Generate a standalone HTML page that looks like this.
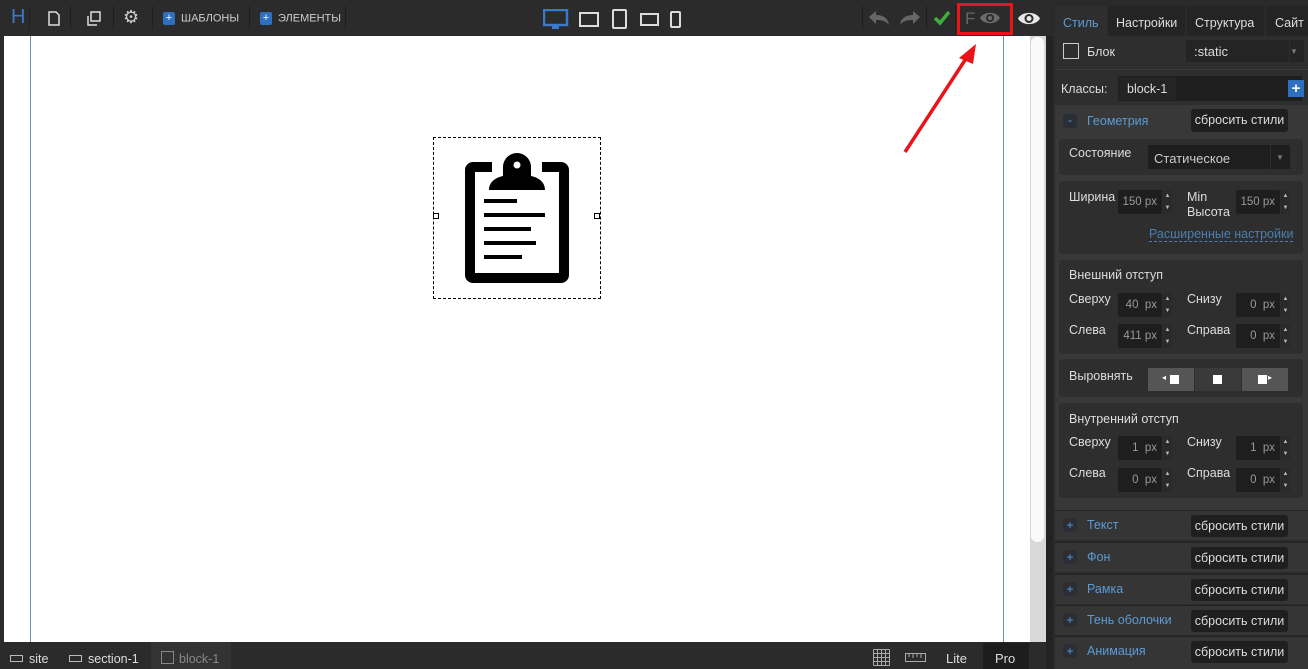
<!DOCTYPE html>
<html><head><meta charset="utf-8"><style>
*{box-sizing:border-box;margin:0;padding:0}
body{width:1308px;height:669px;overflow:hidden;background:#2b2b2b;font-family:"Liberation Sans","DejaVu Sans",sans-serif;font-size:12px;color:#ddd;position:relative}
.a{position:absolute}
.sep{position:absolute;top:6px;width:1px;height:24px;background:#1f1f1f}
.tb{color:#ccc;font-size:11px}
.plus{display:inline-block;width:12px;height:13px;background:#2f6fc0;border-radius:2px;color:#fff;font-size:11px;line-height:13px;text-align:center;vertical-align:middle;margin-right:6px}
.box{position:absolute;left:1059px;width:244px;background:#2e2e2e;border-radius:3px}
.lbl{position:absolute;color:#ddd;font-size:12.5px}
.inp{position:absolute;width:44px;height:24px;background:#1e1e1e;border-radius:2px;color:#999;font-size:11.5px;line-height:24px;text-align:right;padding-right:5px}
.spin{position:absolute;width:9px;height:24px;background:#2a2a2a;color:#bbb;font-size:6px;line-height:12px;text-align:center}
.row{position:absolute;left:1055px;width:253px;height:30px;background:#353535;border-top:1px solid #222}
.row .p{position:absolute;left:8px;top:7px;width:14px;height:14px;background:#2a2f36;border-radius:3px;color:#5b9bd5;text-align:center;line-height:14px;font-size:12px}
.row .t{position:absolute;left:32px;top:7px;color:#5b9bd5;font-size:12.5px}
.row .r{position:absolute;left:136px;top:4px;width:97px;height:22px;background:#1f1f1f;border-radius:3px;color:#ddd;line-height:22px;text-align:center;font-size:12.5px}
</style></head><body>
<!-- top bar -->
<div class="a" style="left:11px;top:6px;color:#3a78c9;font-size:20px">H</div>
<div class="sep" style="left:29px"></div>
<svg class="a" style="left:48px;top:11px" width="12" height="15"><path d="M1 1h7l3 3v10H1z" fill="none" stroke="#ddd" stroke-width="1.5"/></svg>
<div class="sep" style="left:70px"></div>
<svg class="a" style="left:86px;top:11px" width="16" height="16"><path d="M5 1h9v9H5z M2 5v9h9" fill="none" stroke="#ddd" stroke-width="1.5"/></svg>
<div class="sep" style="left:113px"></div>
<div class="a" style="left:123px;top:7px;color:#ccc;font-size:18px">⚙</div>
<div class="sep" style="left:152px"></div>
<div class="a tb" style="left:163px;top:12px"><span class="plus">+</span>ШАБЛОНЫ</div>
<div class="sep" style="left:249px"></div>
<div class="a tb" style="left:260px;top:12px"><span class="plus">+</span>ЭЛЕМЕНТЫ</div>
<div class="sep" style="left:345px"></div>
<svg class="a" style="left:543px;top:9px" width="26" height="22"><rect x="1" y="1" width="23" height="15" fill="none" stroke="#3a78c9" stroke-width="2.5"/><rect x="9" y="16" width="7" height="4" fill="#3a78c9"/></svg>
<svg class="a" style="left:579px;top:12px" width="21" height="16"><rect x="1" y="1" width="18" height="13" fill="none" stroke="#ddd" stroke-width="2"/></svg>
<svg class="a" style="left:612px;top:9px" width="16" height="20"><rect x="1" y="1" width="13" height="18" rx="1" fill="none" stroke="#ddd" stroke-width="2"/></svg>
<svg class="a" style="left:640px;top:13px" width="20" height="14"><rect x="1" y="1" width="17" height="11" fill="none" stroke="#ddd" stroke-width="2"/></svg>
<svg class="a" style="left:670px;top:11px" width="12" height="18"><rect x="1" y="1" width="9" height="15" rx="1" fill="none" stroke="#ddd" stroke-width="2"/></svg>
<div class="sep" style="left:862px"></div>
<svg class="a" style="left:867px;top:10px" width="24" height="16"><path d="M2 7l7-6v4c7 0 12 3 13 10c-3-4-7-5-13-5v4z" fill="#666"/></svg>
<svg class="a" style="left:898px;top:10px" width="24" height="16"><path d="M22 7l-7-6v4c-7 0-12 3-13 10c3-4 7-5 13-5v4z" fill="#666"/></svg>
<div class="sep" style="left:926px"></div>
<svg class="a" style="left:933px;top:10px" width="18" height="16"><path d="M2 8l5 5L16 2" fill="none" stroke="#3fae3f" stroke-width="3.5"/></svg>
<div class="sep" style="left:955px"></div>
<div class="a" style="left:957px;top:3px;width:56px;height:32px;border:3px solid #e8141a"></div>
<div class="a" style="left:965px;top:9px;color:#666;font-size:17px">F</div>
<svg class="a" style="left:979px;top:11px" width="22" height="14"><path d="M1 7C5 0 17 0 21 7C17 14 5 14 1 7z" fill="#6a6a6a"/><circle cx="11" cy="7" r="4" fill="#2b2b2b"/><circle cx="11" cy="7" r="2.2" fill="#6a6a6a"/></svg>
<svg class="a" style="left:1017px;top:11px" width="24" height="15"><path d="M1 7.5C5 0 19 0 23 7.5C19 15 5 15 1 7.5z" fill="#e8e8e8"/><circle cx="12" cy="7.5" r="4.5" fill="#2b2b2b"/><circle cx="12" cy="7.5" r="2.5" fill="#e8e8e8"/></svg>

<!-- canvas -->
<div class="a" style="left:4px;top:36px;width:1026px;height:606px;background:#fff"></div>
<div class="a" style="left:30px;top:36px;width:1px;height:606px;background:#6f8ea8"></div>
<div class="a" style="left:1003px;top:36px;width:1px;height:606px;background:#6f8ea8"></div>
<div class="a" style="left:1030px;top:36px;width:16px;height:606px;background:#d8d8d8"></div>
<div class="a" style="left:1031px;top:37px;width:13px;height:505px;background:#fafafa;border-radius:6px"></div>
<div class="a" style="left:1046px;top:36px;width:7px;height:633px;background:#232323"></div>
<div class="a" style="left:433px;top:137px;width:168px;height:162px;border:1px dashed #000"></div>
<div class="a" style="left:433px;top:213px;width:6px;height:6px;border:1px solid #000;background:#fff"></div>
<div class="a" style="left:594px;top:213px;width:6px;height:6px;border:1px solid #000;background:#fff"></div>
<svg class="a" style="left:460px;top:150px" width="115" height="140" viewBox="460 150 115 140">
<path d="M492 162H473a8 8 0 0 0-8 8v105a8 8 0 0 0 8 8h88a8 8 0 0 0 8-8V170a8 8 0 0 0-8-8H542v10h17v101H475V172h17z" fill="#000"/>
<path d="M489 190c0-7 5-12 14-14V167a14 14 0 0 1 28 0v9c9 2 14 7 14 14z" fill="#000"/>
<circle cx="517" cy="165" r="3.5" fill="#fff"/>
<g stroke="#000" stroke-width="4"><path d="M484 201h33M484 215h61M484 229h47M484 243h52M484 257h38"/></g>
</svg>
<svg class="a" style="left:895px;top:38px" width="90" height="120"><path d="M10 114L74 16" stroke="#e8141a" stroke-width="3.5"/><path d="M81 6L64 20L78 26z" fill="#e8141a"/></svg>

<!-- bottom bar -->
<div class="a" style="left:0;top:642px;width:1046px;height:27px;background:#2b2b2b"></div>
<div class="a" style="left:151px;top:642px;width:80px;height:27px;background:#333"></div>
<div class="a" style="left:10px;top:655px;width:13px;height:7px;border:1px solid #bbb"></div>
<div class="a" style="left:29px;top:652px;color:#ddd;font-size:12.5px">site</div>
<div class="a" style="left:69px;top:655px;width:13px;height:7px;border:1px solid #bbb"></div>
<div class="a" style="left:88px;top:652px;color:#ddd;font-size:12.5px">section-1</div>
<div class="a" style="left:161px;top:651px;width:13px;height:13px;border:1px solid #888"></div>
<div class="a" style="left:179px;top:652px;color:#888;font-size:12.5px">block-1</div>
<svg class="a" style="left:873px;top:649px" width="17" height="17"><g stroke="#aaa" stroke-width="1"><path d="M0.5 0.5v16M4.5 0.5v16M8.5 0.5v16M12.5 0.5v16M16.5 0.5v16M0.5 0.5h16M0.5 4.5h16M0.5 8.5h16M0.5 12.5h16M0.5 16.5h16"/></g></svg>
<svg class="a" style="left:905px;top:653px" width="21" height="9"><rect x="0.5" y="0.5" width="20" height="8" fill="none" stroke="#aaa"/><path d="M4 1v3M8 1v4M12 1v3M16 1v4" stroke="#aaa"/></svg>
<div class="a" style="left:946px;top:651px;color:#ddd;font-size:13px">Lite</div>
<div class="a" style="left:983px;top:643px;width:46px;height:26px;background:#1d1d1d"></div>
<div class="a" style="left:995px;top:651px;color:#ddd;font-size:13px">Pro</div>

<!-- right panel -->
<div class="a" style="left:1053px;top:0;width:255px;height:669px;background:#2a2a2a"></div>
<div class="a" style="left:1055px;top:6px;width:52px;height:30px;background:#2e2e2e;color:#5b9bd5;padding:10px 0 0 8px;font-size:12.5px">Стиль</div>
<div class="a" style="left:1108px;top:6px;width:77px;height:30px;background:#242424;color:#ddd;padding:10px 0 0 8px;font-size:12.5px">Настройки</div>
<div class="a" style="left:1187px;top:6px;width:77px;height:30px;background:#242424;color:#ddd;padding:10px 0 0 8px;font-size:12.5px">Структура</div>
<div class="a" style="left:1266px;top:6px;width:42px;height:30px;background:#242424;color:#ddd;padding:10px 0 0 9px;font-size:12.5px">Сайт</div>
<div class="a" style="left:1055px;top:36px;width:253px;height:34px;background:#2e2e2e;border-bottom:1px solid #3a3a3a"></div>
<div class="a" style="left:1063px;top:43px;width:16px;height:16px;border:1px solid #ccc"></div>
<div class="a" style="left:1087px;top:45px;color:#ddd;font-size:12.5px">Блок</div>
<div class="a" style="left:1186px;top:40px;width:103px;height:22px;background:#242424;color:#ddd;padding:4px 0 0 8px;font-size:13px">:static</div>
<div class="a" style="left:1290px;top:40px;width:14px;height:22px;background:#242424;color:#777;font-size:8px;padding-top:7px">▼</div>
<div class="a" style="left:1055px;top:71px;width:253px;height:34px;background:#2e2e2e"></div>
<div class="a" style="left:1061px;top:82px;font-size:12.5px">Классы:</div>
<div class="a" style="left:1118px;top:76px;width:184px;height:25px;background:#1e1e1e"></div>
<div class="a" style="left:1119px;top:77px;width:57px;height:23px;background:#242424;color:#ddd;padding:5px 0 0 8px;font-size:12.5px">block-1</div>
<div class="a" style="left:1288px;top:80px;width:16px;height:17px;background:#2f6fc0;color:#fff;font-weight:bold;text-align:center;font-size:15px;line-height:17px">+</div>
<div class="a" style="left:1055px;top:105px;width:253px;height:405px;background:#383838"></div>
<div class="a" style="left:1063px;top:114px;width:14px;height:14px;background:#2a2f36;border-radius:3px;color:#5b9bd5;text-align:center;line-height:13px">-</div>
<div class="a" style="left:1087px;top:114px;color:#5b9bd5;font-size:12.5px">Геометрия</div>
<div class="a" style="left:1191px;top:109px;width:97px;height:23px;background:#1f1f1f;border-radius:3px;color:#ddd;line-height:23px;text-align:center;font-size:12.5px">сбросить стили</div>

<div class="box" style="top:139px;height:36px"></div>
<div class="lbl" style="left:1069px;top:146px">Состояние</div>
<div class="a" style="left:1148px;top:145px;width:122px;height:24px;background:#1e1e1e;color:#ccc;padding:6px 0 0 6px;font-size:13px">Статическое</div>
<div class="a" style="left:1271px;top:145px;width:19px;height:24px;background:#1e1e1e;color:#777;font-size:8px;padding:8px 0 0 5px">▼</div>

<div class="box" style="top:181px;height:73px"></div>
<div class="lbl" style="left:1069px;top:190px">Ширина</div>
<div class="inp" style="left:1118px;top:190px">150 px</div><div class="spin" style="left:1163px;top:190px">▲<br>▼</div>
<div class="lbl" style="left:1187px;top:190px;line-height:15px">Min<br>Высота</div>
<div class="inp" style="left:1236px;top:190px">150 px</div><div class="spin" style="left:1281px;top:190px">▲<br>▼</div>
<div class="a" style="left:1149px;top:227px;color:#4a7fb0;border-bottom:1px dashed #4a7fb0;font-size:12.5px">Расширенные настройки</div>

<div class="box" style="top:260px;height:94px"></div>
<div class="lbl" style="left:1069px;top:268px">Внешний отступ</div>
<div class="lbl" style="left:1069px;top:292px">Сверху</div>
<div class="inp" style="left:1118px;top:293px">40&nbsp; px</div><div class="spin" style="left:1163px;top:293px">▲<br>▼</div>
<div class="lbl" style="left:1187px;top:292px">Снизу</div>
<div class="inp" style="left:1236px;top:293px">0&nbsp; px</div><div class="spin" style="left:1281px;top:293px">▲<br>▼</div>
<div class="lbl" style="left:1069px;top:323px">Слева</div>
<div class="inp" style="left:1118px;top:324px">411 px</div><div class="spin" style="left:1163px;top:324px">▲<br>▼</div>
<div class="lbl" style="left:1187px;top:323px">Справа</div>
<div class="inp" style="left:1236px;top:324px">0&nbsp; px</div><div class="spin" style="left:1281px;top:324px">▲<br>▼</div>

<div class="box" style="top:359px;height:38px"></div>
<div class="lbl" style="left:1069px;top:369px">Выровнять</div>
<div class="a" style="left:1148px;top:368px;width:46px;height:23px;background:#555"></div>
<div class="a" style="left:1195px;top:368px;width:46px;height:23px;background:#3a3a3a"></div>
<div class="a" style="left:1242px;top:368px;width:46px;height:23px;background:#555"></div>
<div class="a" style="left:1170px;top:375px;width:9px;height:9px;background:#fff"></div>
<div class="a" style="left:1162px;top:373px;color:#fff;font-size:8px">◂</div>
<div class="a" style="left:1213px;top:375px;width:9px;height:9px;background:#fff"></div>
<div class="a" style="left:1258px;top:375px;width:9px;height:9px;background:#fff"></div>
<div class="a" style="left:1268px;top:373px;color:#fff;font-size:8px">▸</div>

<div class="box" style="top:403px;height:95px"></div>
<div class="lbl" style="left:1069px;top:412px">Внутренний отступ</div>
<div class="lbl" style="left:1069px;top:435px">Сверху</div>
<div class="inp" style="left:1118px;top:436px">1&nbsp; px</div><div class="spin" style="left:1163px;top:436px">▲<br>▼</div>
<div class="lbl" style="left:1187px;top:435px">Снизу</div>
<div class="inp" style="left:1236px;top:436px">1&nbsp; px</div><div class="spin" style="left:1281px;top:436px">▲<br>▼</div>
<div class="lbl" style="left:1069px;top:466px">Слева</div>
<div class="inp" style="left:1118px;top:468px">0&nbsp; px</div><div class="spin" style="left:1163px;top:468px">▲<br>▼</div>
<div class="lbl" style="left:1187px;top:466px">Справа</div>
<div class="inp" style="left:1236px;top:468px">0&nbsp; px</div><div class="spin" style="left:1281px;top:468px">▲<br>▼</div>

<div class="row" style="top:510px"><div class="p">+</div><div class="t">Текст</div><div class="r">сбросить стили</div></div>
<div class="row" style="top:542px"><div class="p">+</div><div class="t">Фон</div><div class="r">сбросить стили</div></div>
<div class="row" style="top:574px"><div class="p">+</div><div class="t">Рамка</div><div class="r">сбросить стили</div></div>
<div class="row" style="top:605px"><div class="p">+</div><div class="t">Тень оболочки</div><div class="r">сбросить стили</div></div>
<div class="row" style="top:636px;height:33px"><div class="p">+</div><div class="t">Анимация</div><div class="r">сбросить стили</div></div>
</body></html>
